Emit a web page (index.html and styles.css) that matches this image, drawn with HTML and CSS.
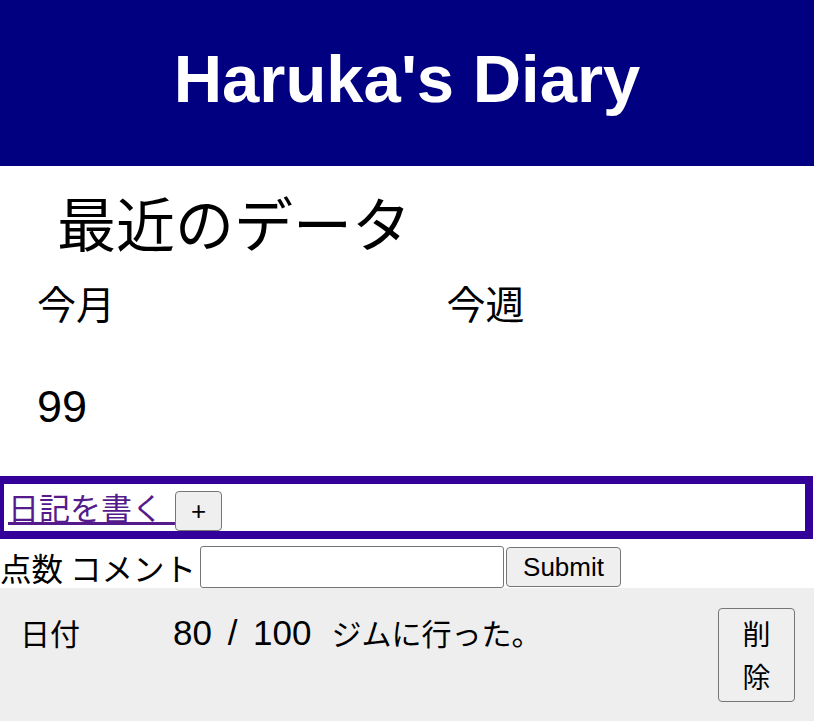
FILE: index.html
```html
<!DOCTYPE html>
<html lang="ja">
<head>
<meta charset="utf-8">
<title>Haruka's Diary</title>
<link rel="stylesheet" href="styles.css">
</head>
<body>
<header class="site-header">
  <h1 class="site-title">Haruka's Diary</h1>
</header>
<section class="recent">
  <h2 class="recent-title">最近のデータ</h2>
  <div class="stats">
    <div class="stat">
      <div class="stat-label">今月</div>
      <div class="stat-value">99</div>
    </div>
    <div class="stat">
      <div class="stat-label">今週</div>
      <div class="stat-value"></div>
    </div>
  </div>
</section>
<div class="write-box">
  <a href="#" class="write-link">日記を書く </a><button type="button" class="btn plus-btn">+</button>
</div>
<form class="entry-form">
  <label class="form-label">点数 コメント</label><input type="text" class="comment-input"><button type="submit" class="btn submit-btn">Submit</button>
</form>
<ul class="entries">
  <li class="entry">
    <span class="entry-date">日付</span>
    <span class="entry-score">80 / 100</span>
    <span class="entry-comment">ジムに行った。</span>
    <button type="button" class="btn delete-btn">削除</button>
  </li>
</ul>
</body>
</html>
```
FILE: styles.css
```css
html, body {
  margin: 0;
  padding: 0;
  overflow-x: hidden;
}
body {
  font-family: "Liberation Sans", "Noto Sans CJK JP", sans-serif;
  color: #000;
  background: #fff;
}
.site-header {
  background: #000080;
  height: 166px;
  box-sizing: border-box;
  padding-top: 45px;
}
.site-title {
  margin: 0;
  color: #fff;
  text-align: center;
  font-family: "Liberation Sans", sans-serif;
  font-weight: bold;
  font-size: 67px;
  line-height: 67px;
}
.recent {
  padding-top: 20px;
}
.recent-title {
  margin: 0;
  padding-left: 57px;
  font-family: "Noto Sans CJK JP", sans-serif;
  font-weight: normal;
  font-size: 59px;
  line-height: 72px;
}
.stats {
  display: grid;
  grid-template-columns: 1fr 1fr;
  column-gap: 42px;
  padding-left: 37px;
  margin-top: 20px;
}
.stat-label {
  font-family: "Noto Sans CJK JP", sans-serif;
  font-size: 39px;
  line-height: 48px;
}
.stat-value {
  font-family: "Liberation Sans", sans-serif;
  font-size: 45px;
  line-height: 52px;
  margin-top: 55px;
  min-height: 52px;
}
.write-box {
  margin: 43px 0 0 -4px;
  width: 817px;
  box-sizing: border-box;
  border: 8px solid #330099;
  height: 63px;
  padding: 7px 4px 0 4px;
  display: flex;
  align-items: baseline;
}
.write-link {
  color: #551a8b;
  font-family: "Noto Sans CJK JP", sans-serif;
  font-size: 31px;
  line-height: 30px;
  word-spacing: 5px;
  text-decoration: underline;
  white-space: pre;
}
.btn {
  font-family: "Liberation Sans", sans-serif;
  font-size: 26px;
  background: #efefef;
  border: 1px solid #767676;
  border-radius: 4px;
  color: #000;
  padding: 4px 15px;
  line-height: 30px;
}
.entry-form {
  margin: 7px 0 0 0;
  display: flex;
  align-items: center;
  height: 42px;
}
.form-label {
  font-family: "Noto Sans CJK JP", sans-serif;
  font-size: 31.5px;
  line-height: 42px;
  white-space: pre;
  margin-right: 4px;
}
.comment-input {
  width: 304px;
  height: 42px;
  box-sizing: border-box;
  border: 1px solid #767676;
  border-radius: 3px;
  margin: 0;
  padding: 1px 2px;
  font-size: 26px;
}
.submit-btn {
  margin-left: 2px;
  padding: 4px 16px;
}
.entries {
  list-style: none;
  margin: 0;
  padding: 0;
  background: #eeeeee;
}
.entry {
  display: flex;
  align-items: baseline;
  padding: 20px 19px 19px 20px;
}
.entry-date {
  flex: 0 0 153px;
  font-family: "Noto Sans CJK JP", sans-serif;
  font-size: 30px;
}
.entry-score {
  font-family: "Liberation Sans", sans-serif;
  font-size: 35px;
  word-spacing: 6px;
  margin-right: 20px;
}
.entry-comment {
  font-family: "Noto Sans CJK JP", sans-serif;
  font-size: 30px;
}
.delete-btn {
  margin-left: auto;
  width: 77px;
  padding: 3px 20px;
  font-family: "Noto Sans CJK JP", sans-serif;
  font-size: 28px;
  line-height: 43px;
  text-align: center;
}
```
